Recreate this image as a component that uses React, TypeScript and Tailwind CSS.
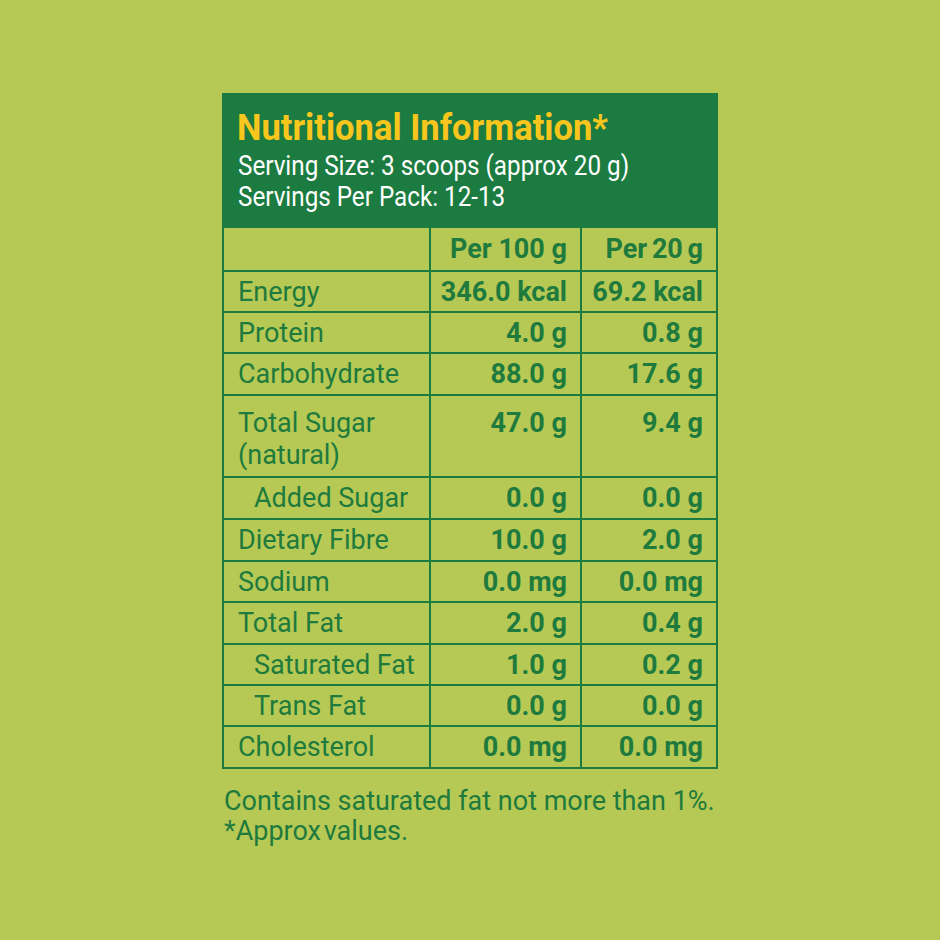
import React from "react";

type Row = { label: string; a: string; b: string; indent?: boolean; h: string; two?: boolean; last?: boolean };

const rows: Row[] = [
  { label: "Energy", a: "346.0 kcal", b: "69.2 kcal", h: "h-[41px]" },
  { label: "Protein", a: "4.0 g", b: "0.8 g", h: "h-[41px]" },
  { label: "Carbohydrate", a: "88.0 g", b: "17.6 g", h: "h-[42px]" },
  { label: "Total Sugar", a: "47.0 g", b: "9.4 g", h: "h-[82px]", two: true },
  { label: "Added Sugar", a: "0.0 g", b: "0.0 g", h: "h-[42px]", indent: true },
  { label: "Dietary Fibre", a: "10.0 g", b: "2.0 g", h: "h-[42px]" },
  { label: "Sodium", a: "0.0 mg", b: "0.0 mg", h: "h-[41px]" },
  { label: "Total Fat", a: "2.0 g", b: "0.4 g", h: "h-[42px]" },
  { label: "Saturated Fat", a: "1.0 g", b: "0.2 g", h: "h-[41px]", indent: true },
  { label: "Trans Fat", a: "0.0 g", b: "0.0 g", h: "h-[41px]", indent: true },
  { label: "Cholesterol", a: "0.0 mg", b: "0.0 mg", h: "h-[40px]", last: true },
];

export default function App() {
  return (
    <div
      className="w-[940px] h-[940px] bg-[#b6c954] pt-[93px] pl-[222px]"
      style={{ fontFamily: "Roboto, 'Liberation Sans', sans-serif" }}
    >
      <div className="w-[496px]">
        <div className="bg-[#1c7b40] h-[133px] pl-[15px] pt-[15px] overflow-hidden">
          <div className="text-[36px] leading-[40px] font-bold text-[#f8c61c] whitespace-nowrap">
            <span className="inline-block origin-left scale-x-[0.96]">Nutritional Information*</span>
          </div>
          <div className="mt-[3px] text-[27px] leading-[31px] text-white pl-px whitespace-nowrap">
            <span className="inline-block origin-left scale-x-[0.897]">Serving Size: 3 scoops (approx 20 g)</span>
          </div>
          <div className="text-[27px] leading-[31px] text-white pl-px whitespace-nowrap">
            <span className="inline-block origin-left scale-x-[0.897]">Servings Per Pack: 12-13</span>
          </div>
        </div>
        <div className="border-2 border-[#1c7b40] text-[#1e7a3d] text-[27px] leading-[32px]">
          <div className="grid grid-cols-[207px_151px_1fr] h-[44px] border-b-2 border-[#1c7b40] font-bold">
            <div className="border-r-2 border-[#1c7b40]" />
            <div className="border-r-2 border-[#1c7b40] text-right pr-[13px] pt-[5px]">Per 100 g</div>
            <div className="text-right pr-[13px] pt-[5px] [word-spacing:-2px]">Per 20 g</div>
          </div>
          {rows.map((r) => (
            <div
              key={r.label}
              className={`grid grid-cols-[207px_151px_1fr] ${r.h} ${r.last ? "" : "border-b-2 border-[#1c7b40]"}`}
            >
              <div
                className={`border-r-2 border-[#1c7b40] ${r.indent ? "pl-[30px]" : "pl-[14px]"} ${
                  r.two ? "pt-[11px]" : "pt-[4px]"
                }`}
              >
                {r.two ? (
                  <>
                    <div>Total Sugar</div>
                    <div>(natural)</div>
                  </>
                ) : (
                  r.label
                )}
              </div>
              <div
                className={`border-r-2 border-[#1c7b40] text-right pr-[13px] font-bold ${
                  r.two ? "pt-[11px]" : "pt-[4px]"
                }`}
              >
                {r.a}
              </div>
              <div className={`text-right pr-[13px] font-bold ${r.two ? "pt-[11px]" : "pt-[4px]"}`}>{r.b}</div>
            </div>
          ))}
        </div>
        <div className="mt-[17px] ml-[2px] text-[27px] leading-[30px] text-[#1e7a3d] whitespace-nowrap">
          <div>Contains saturated fat not more than 1%.</div>
          <div className="[word-spacing:-4px]">*Approx values.</div>
        </div>
      </div>
    </div>
  );
}
